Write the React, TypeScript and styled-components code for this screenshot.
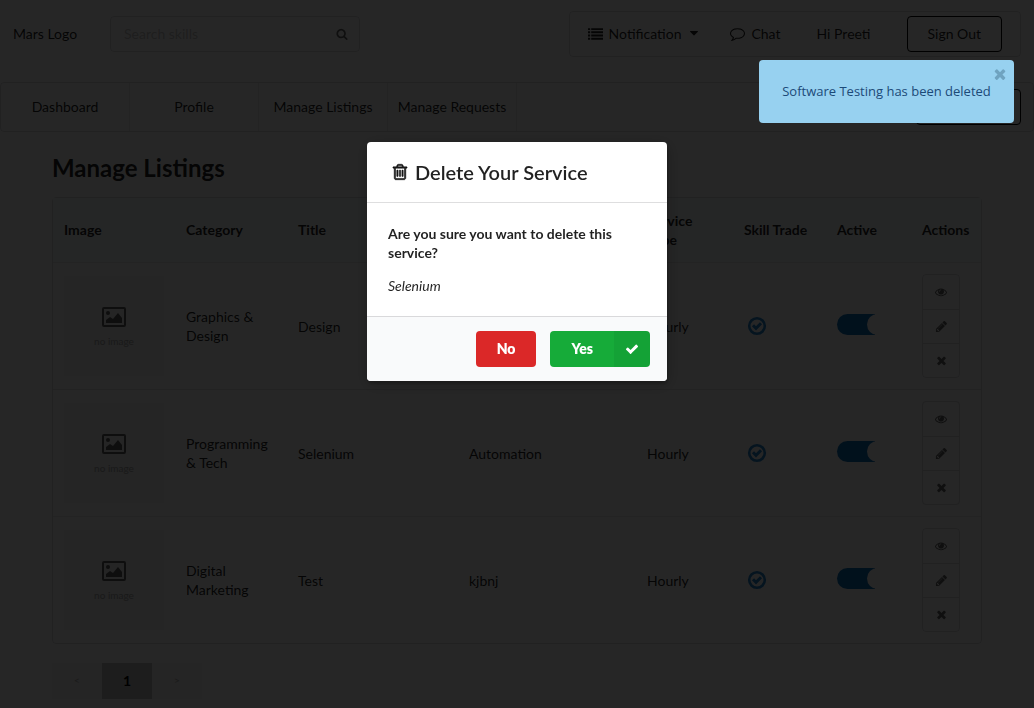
import React, { useState } from 'react';
import styled, { createGlobalStyle } from 'styled-components';

const GlobalStyle = createGlobalStyle`
  *, *::before, *::after { box-sizing: border-box; }
  body {
    margin: 0;
    background: #fff;
    color: rgba(0, 0, 0, 0.87);
    font-family: Lato, "Liberation Sans", sans-serif;
    font-size: 14px;
    line-height: 19px;
  }
  button, input { font-family: inherit; font-size: 14px; color: inherit; }
  button { cursor: pointer; }
`;

const iconPaths = {
  search:
    'M1216 832q0-185-131.500-316.500t-316.500-131.500-316.500 131.500-131.500 316.500 131.500 316.500 316.500 131.500 316.500-131.500 131.500-316.500zm512 832q0 52-38 90t-90 38q-54 0-90-38l-343-342q-179 124-399 124-143 0-273.500-55.500t-225-150-150-225-55.500-273.500 55.500-273.500 150-225 225-150 273.500-55.500 273.500 55.500 225 150 150 225 55.500 273.500q0 220-124 399l343 343q37 37 37 90z',
  trash:
    'M704 736v576q0 14-9 23t-23 9h-64q-14 0-23-9t-9-23v-576q0-14 9-23t23-9h64q14 0 23 9t9 23zm256 0v576q0 14-9 23t-23 9h-64q-14 0-23-9t-9-23v-576q0-14 9-23t23-9h64q14 0 23 9t9 23zm256 0v576q0 14-9 23t-23 9h-64q-14 0-23-9t-9-23v-576q0-14 9-23t23-9h64q14 0 23 9t9 23zm128 724v-948h-896v948q0 22 7 40.500t14.500 27 10.500 8.500h832q3 0 10.500-8.500t14.500-27 7-40.500zm-672-1076h448l-48-117q-7-9-17-11h-317q-10 2-17 11zm928 32v64q0 14-9 23t-23 9h-96v948q0 83-47 143.500t-113 60.500h-832q-66 0-113-58.500t-47-141.500v-952h-96q-14 0-23-9t-9-23v-64q0-14 9-23t23-9h309l70-167q15-37 54-63t79-26h320q40 0 79 26t54 63l70 167h309q14 0 23 9t9 23z',
  check:
    'M1671 566q0 40-28 68l-724 724-136 136q-28 28-68 28t-68-28l-136-136-362-362q-28-28-28-68t28-68l136-136q28-28 68-28t68 28l294 295 656-657q28-28 68-28t68 28l136 136q28 28 28 68z',
  remove:
    'M1490 1322q0 40-28 68l-136 136q-28 28-68 28t-68-28l-294-294-294 294q-28 28-68 28t-68-28l-136-136q-28-28-28-68t28-68l294-294-294-294q-28-28-28-68t28-68l136-136q28-28 68-28t68 28l294 294 294-294q28-28 68-28t68 28l136 136q28 28 28 68t-28 68l-294 294 294 294q28 28 28 68z',
  pencil:
    'M491 1536l91-91-235-235-91 91v107h128v128h107zm523-928q0-22-22-22-10 0-17 7l-542 542q-7 7-7 17 0 22 22 22 10 0 17-7l542-542q7-7 7-17zm-54-192l416 416-832 832h-416v-416zm683 96q0 53-37 90l-166 166-416-416 166-165q36-38 90-38 53 0 91 38l235 234q37 39 37 91z',
  eye:
    'M1664 960q-152-236-381-353 61 104 61 225 0 185-131.500 316.500t-316.500 131.500-316.500-131.500-131.500-316.500q0-121 61-225-229 117-381 353 133 205 333.500 326.500t434.500 121.500 434.500-121.500 333.500-326.500zm-720-384q0-20-14-34t-34-14q-125 0-214.500 89.500t-89.500 214.500q0 20 14 34t34 14 34-14 14-34q0-86 61-147t147-61q20 0 34-14t14-34zm848 384q0 34-20 69-140 230-376.500 368.500t-499.500 138.500-499.500-139-376.500-368q-20-35-20-69t20-69q140-229 376.500-368t499.500-139 499.500 139 376.500 368q20 35 20 69z',
  comment:
    'M896 384q-204 0-381.500 69.500t-282 187.500-104.500 255q0 112 71.500 213.500t201.500 175.500l87 50-27 96q-24 91-70 172 152-63 275-171l43-38 57 6q69 8 130 8 204 0 381.500-69.500t282-187.500 104.500-255-104.500-255-282-187.500-381.500-69.500zm896 512q0 174-120 321.500t-326 233-450 85.500q-70 0-145-8-198 175-460 242-49 14-114 22h-5q-15 0-27-10.500t-16-27.500v-1q-3-4-.5-12t2-10 4.500-9.500l6-9 7-8.500 8-9q7-8 31-34.500t34.500-38 31-39.500 32.500-51 27-59 26-76q-157-89-247.500-220t-90.500-281q0-130 71-248.500t191-204.500 286-136.500 348-50.500 348 50.500 286 136.500 191 204.500 71 248.500z',
  list:
    'M0 256h256v224H0zM384 256h1408v224H384zM0 640h256v224H0zM384 640h1408v224H384zM0 1024h256v224H0zM384 1024h1408v224H384zM0 1408h256v224H0zM384 1408h1408v224H384z',
  caret: 'M1408 704q0 26-19 45l-448 448q-19 19-45 19t-45-19l-448-448q-19-19-19-45t19-45 45-19h896q26 0 45 19t19 45z',
};

function Icon({ name, size = 14, heavy = false }: { name: keyof typeof iconPaths; size?: number; heavy?: boolean }) {
  return (
    <svg
      width={size}
      height={size}
      viewBox="0 0 1792 1792"
      fill="currentColor"
      stroke={heavy ? 'currentColor' : 'none'}
      strokeWidth={60}
      aria-hidden="true"
    >
      <path d={iconPaths[name]} />
    </svg>
  );
}

const Page = styled.div`
  display: flex;
  flex-direction: column;
  min-height: 100vh;
`;

const TopBar = styled.header`
  display: flex;
  align-items: center;
  padding: 11px 13px;
`;

const Logo = styled.span`
  width: 97px;
  padding-bottom: 2px;
`;

const SearchBox = styled.label`
  display: flex;
  align-items: center;
  width: 250px;
  height: 36px;
  padding: 0 11px 0 13px;
  border: 1px solid rgba(34, 36, 38, 0.15);
  border-radius: 4px;
  color: rgba(0, 0, 0, 0.6);
`;

const SearchInput = styled.input`
  flex: 1;
  min-width: 0;
  padding: 0 0 2px;
  border: 0;
  outline: 0;
  background: transparent;
  &::placeholder { color: rgba(191, 191, 191, 0.87); }
`;

const UserMenu = styled.nav`
  display: flex;
  align-items: center;
  height: 46px;
  margin-left: auto;
  padding: 0 18px;
  border: 1px solid rgba(34, 36, 38, 0.15);
  border-radius: 4px;
`;

const MenuButton = styled.button`
  display: flex;
  align-items: center;
  gap: 6px;
  margin-right: 29px;
  padding: 0 0 2px;
  border: 0;
  background: none;
`;

const Greeting = styled.span`
  margin: 0 36px 0 7px;
  padding-bottom: 2px;
`;

const OutlineButton = styled.button`
  min-width: 95px;
  height: 36px;
  padding: 0 20px 2px;
  border: 1px solid #000;
  border-radius: 4px;
  background: #fff;
`;

const ShareButton = styled(OutlineButton)`
  min-width: 105px;
`;

const NavBar = styled.nav`
  display: flex;
  align-items: center;
  height: 50px;
  margin-top: 14px;
  padding-right: 12px;
  border: 1px solid rgba(34, 36, 38, 0.15);
  border-radius: 4px;
`;

const NavLink = styled.a`
  display: flex;
  align-items: center;
  justify-content: center;
  width: 129px;
  height: 48px;
  padding-bottom: 2px;
  border-right: 1px solid rgba(34, 36, 38, 0.1);
  color: inherit;
  text-decoration: none;
`;

const NavAction = styled.div`
  margin-left: auto;
`;

const Main = styled.main`
  padding: 20px 52px 8px;
`;

const Title = styled.h2`
  margin: 0 0 13px;
  font-size: 24px;
  font-weight: 700;
  line-height: 32px;
`;

const Listings = styled.table`
  width: 100%;
  table-layout: fixed;
  border: 1px solid rgba(34, 36, 38, 0.15);
  border-radius: 4px;
  border-collapse: separate;
  border-spacing: 0;
`;

const HeadCell = styled.th`
  height: 64px;
  padding: 0 11px 1px;
  background: #f9fafb;
  text-align: left;
`;

const ListingRow = styled.tr`
  height: 127px;
  &:nth-child(2n) { background: rgba(0, 0, 50, 0.02); }
`;

const Cell = styled.td`
  padding: 0 11px;
  border-top: 1px solid rgba(34, 36, 38, 0.1);
`;

const Placeholder = styled.div`
  display: flex;
  flex-direction: column;
  align-items: center;
  gap: 5px;
  width: 100px;
  height: 100px;
  padding-top: 31px;
  background: #f3f3f3;
  color: #aaa;
  font-size: 10px;
`;

const TradeMark = styled.span`
  display: block;
  height: 20px;
  padding-left: 3px;
  color: #2185d0;
`;

const Toggle = styled.input`
  appearance: none;
  display: block;
  width: 49px;
  height: 21px;
  margin: 0 0 4px;
  border-radius: 21px;
  background: rgba(0, 0, 0, 0.05);
  &::before {
    content: '';
    display: block;
    width: 21px;
    height: 21px;
    border-radius: 50%;
    background: #fff;
  }
  &:checked {
    background: linear-gradient(90deg, #0d71bb 38px, #fbfbfb 38px);
  }
  &:checked::before { margin-left: 30px; }
`;

const ActionGroup = styled.div`
  display: flex;
  flex-direction: column;
  width: 38px;
  border: 1px solid rgba(34, 36, 38, 0.15);
  border-radius: 4px;
`;

const ActionButton = styled.button`
  display: flex;
  align-items: center;
  justify-content: center;
  height: 34px;
  padding: 0;
  border: 0;
  background: none;
  color: rgba(0, 0, 0, 0.6);
  & + & {
    border-top: 1px solid rgba(34, 36, 38, 0.15);
  }
`;

const Pagination = styled.div`
  display: flex;
  width: 150px;
  height: 36px;
  margin-top: 19px;
`;

const PageButton = styled.button<{ $active?: boolean }>`
  flex: 1;
  padding: 0 0 2px;
  border: 0;
  background: ${(p) => (p.$active ? '#bfbfbf' : '#f3f3f3')};
  color: ${(p) => (p.$active ? '#000' : '#b0b0b0')};
  font-size: ${(p) => (p.$active ? 14 : 10)}px;
  font-weight: ${(p) => (p.$active ? 700 : 400)};
`;

const Dimmer = styled.div`
  position: fixed;
  inset: 0;
  display: flex;
  align-items: flex-start;
  justify-content: center;
  padding-top: 142px;
  background: rgba(0, 0, 0, 0.85);
`;

const Dialog = styled.section`
  width: 300px;
  overflow: hidden;
  border-radius: 4px;
  background: #fff;
  box-shadow: 1px 3px 3px rgba(0, 0, 0, 0.2), 1px 3px 15px 2px rgba(0, 0, 0, 0.2);
`;

const DialogTitle = styled.h2`
  display: flex;
  align-items: center;
  gap: 6px;
  height: 61px;
  margin: 0;
  padding: 0 24px;
  border-bottom: 1px solid rgba(34, 36, 38, 0.15);
  font-size: 20px;
  font-weight: 600;
`;

const DialogBody = styled.div`
  padding: 21px;
`;

const Question = styled.h4`
  margin: 0 0 14px;
  font-size: 14px;
  font-weight: 700;
`;

const ServiceName = styled.p`
  margin: 0;
  font-style: italic;
`;

const DialogActions = styled.div`
  display: flex;
  justify-content: flex-end;
  gap: 14px;
  padding: 14px 17px;
  border-top: 1px solid rgba(34, 36, 38, 0.15);
  background: #f9fafb;
`;

const DialogButton = styled.button<{ $tone: 'red' | 'green' }>`
  display: flex;
  align-items: center;
  height: 36px;
  padding: 0;
  overflow: hidden;
  border: 0;
  border-radius: 4px;
  background: ${(p) => (p.$tone === 'red' ? '#db2828' : '#16ab39')};
  color: #fff;
  font-weight: 800;
`;

const ButtonLabel = styled.span`
  padding: 0 21px 2px;
`;

const ButtonIcon = styled.span`
  display: flex;
  align-items: center;
  justify-content: center;
  width: 36px;
  height: 36px;
  background: rgba(0, 0, 0, 0.05);
`;

const Toast = styled.div`
  position: fixed;
  top: 60px;
  right: 20px;
  display: flex;
  align-items: center;
  justify-content: center;
  width: 255px;
  height: 63px;
  border-radius: 4px;
  background: #97d1f0;
  color: #1c4a78;
  font-family: "Open Sans", "Noto Sans", sans-serif;
  font-size: 13px;
`;

const ToastClose = styled.button`
  position: absolute;
  top: 6px;
  right: 6px;
  height: 16px;
  padding: 0;
  border: 0;
  background: none;
  color: #6fa3c0;
`;

const listings = [
  { category: 'Graphics & Design', title: 'Design', description: '', type: 'Hourly' },
  { category: 'Programming & Tech', title: 'Selenium', description: 'Automation', type: 'Hourly' },
  { category: 'Digital Marketing', title: 'Test', description: 'kjbnj', type: 'Hourly' },
];

const columns = [
  { label: 'Image', width: 122 },
  { label: 'Category', width: 112 },
  { label: 'Title', width: 171 },
  { label: '', width: 178 },
  { label: 'Service Type', width: 97 },
  { label: 'Skill Trade', width: 93 },
  { label: 'Active', width: 85 },
  { label: 'Actions', width: 70 },
];

function Listing({ item }: { item: (typeof listings)[number] }) {
  const [active, setActive] = useState(true);
  return (
    <ListingRow>
      <Cell>
        <Placeholder>
          <svg width="24" height="20" viewBox="0 0 24 20" fill="none" aria-hidden="true">
            <rect x="1" y="1" width="22" height="18" rx="1" stroke="#606060" strokeWidth="2" />
            <circle cx="6" cy="6" r="2" fill="#606060" />
            <path d="M4 16v-3l4-3 3 2 5-6 4 5v5z" fill="#606060" />
          </svg>
          no image
        </Placeholder>
      </Cell>
      <Cell>{item.category}</Cell>
      <Cell>{item.title}</Cell>
      <Cell>{item.description}</Cell>
      <Cell>{item.type}</Cell>
      <Cell>
        <TradeMark>
          <svg width="20" height="20" viewBox="0 0 20 20" fill="none" stroke="currentColor" aria-label="Skill trade">
            <circle cx="10" cy="10" r="7.800" strokeWidth="2.600" />
            <path d="M6 9.300l3 3 5-5" strokeWidth="3" />
          </svg>
        </TradeMark>
      </Cell>
      <Cell>
        <Toggle
          type="checkbox"
          aria-label={`${item.title} active`}
          checked={active}
          onChange={(e) => setActive(e.target.checked)}
        />
      </Cell>
      <Cell>
        <ActionGroup>
          <ActionButton aria-label="View"><Icon name="eye" size={12} /></ActionButton>
          <ActionButton aria-label="Edit"><Icon name="pencil" size={13} /></ActionButton>
          <ActionButton aria-label="Delete"><Icon name="remove" size={13} /></ActionButton>
        </ActionGroup>
      </Cell>
    </ListingRow>
  );
}

export default function App() {
  return (
    <>
      <GlobalStyle />
      <Page>
        <TopBar>
          <Logo>Mars Logo</Logo>
          <SearchBox>
            <SearchInput type="text" placeholder="Search skills" aria-label="Search skills" />
            <Icon name="search" size={12} />
          </SearchBox>
          <UserMenu>
            <MenuButton>
              <Icon name="list" size={15} />
              Notification
              <Icon name="caret" size={14} />
            </MenuButton>
            <MenuButton>
              <Icon name="comment" size={15} />
              Chat
            </MenuButton>
            <Greeting>Hi Preeti</Greeting>
            <OutlineButton>Sign Out</OutlineButton>
          </UserMenu>
        </TopBar>
        <NavBar>
          <NavLink href="#dashboard">Dashboard</NavLink>
          <NavLink href="#profile">Profile</NavLink>
          <NavLink href="#listings">Manage Listings</NavLink>
          <NavLink href="#requests">Manage Requests</NavLink>
          <NavAction>
            <ShareButton aria-label="Share Skill" />
          </NavAction>
        </NavBar>
        <Main>
          <Title>Manage Listings</Title>
          <Listings>
            <colgroup>
              {columns.map((c) => (
                <col key={c.label} width={c.width} />
              ))}
            </colgroup>
            <thead>
              <tr>
                {columns.map((c) => (
                  <HeadCell key={c.label} scope="col">{c.label}</HeadCell>
                ))}
              </tr>
            </thead>
            <tbody>
              {listings.map((item) => (
                <Listing key={item.title} item={item} />
              ))}
            </tbody>
          </Listings>
          <Pagination>
            <PageButton aria-label="Previous page">&lt;</PageButton>
            <PageButton $active>1</PageButton>
            <PageButton aria-label="Next page">&gt;</PageButton>
          </Pagination>
        </Main>
      </Page>
      <Dimmer>
        <Dialog role="dialog" aria-labelledby="dialog-title">
          <DialogTitle id="dialog-title">
            <Icon name="trash" size={18} heavy />
            Delete Your Service
          </DialogTitle>
          <DialogBody>
            <Question>Are you sure you want to delete this service?</Question>
            <ServiceName>Selenium</ServiceName>
          </DialogBody>
          <DialogActions>
            <DialogButton $tone="red">
              <ButtonLabel>No</ButtonLabel>
            </DialogButton>
            <DialogButton $tone="green">
              <ButtonLabel>Yes</ButtonLabel>
              <ButtonIcon><Icon name="check" size={14} /></ButtonIcon>
            </DialogButton>
          </DialogActions>
        </Dialog>
      </Dimmer>
      <Toast role="status">
        Software Testing has been deleted
        <ToastClose aria-label="Close"><Icon name="remove" size={16} /></ToastClose>
      </Toast>
    </>
  );
}
